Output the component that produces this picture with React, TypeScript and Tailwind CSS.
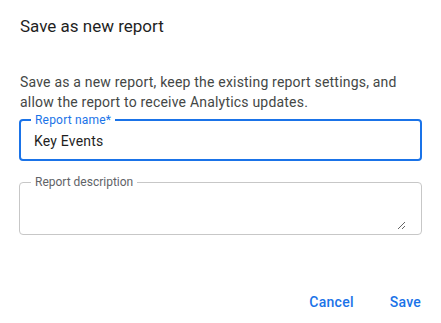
import React from 'react';

export default function App() {
	const [name, setName] = React.useState('Key Events');
	const [description, setDescription] = React.useState('');

	return (
		<div className="flex h-[323px] w-[441px] flex-col bg-white font-['Roboto',sans-serif]">
			<h2 className="px-5 pt-[14px] text-[17px] leading-6 font-normal text-[#1f1f1f]">
				Save as new report
			</h2>

			<p className="mt-[34px] px-5 text-[14px] leading-5 tracking-[0.2px] text-[#444746]">
				Save as a new report, keep the existing report settings, and allow the report to
				receive Analytics updates.
			</p>

			<div className="flex flex-col gap-[13px] px-[19px]">
				{/* Report name, focused */}
				<fieldset className="m-0 h-[49px] min-w-0 rounded-[4px] border-2 border-[#1a73e8] pr-3 pl-[10px]">
					<legend className="px-1 text-[12px] leading-4 tracking-[0.2px] text-[#1a73e8]">
						Report name*
					</legend>
					<input
						value={name}
						onChange={e => setName(e.target.value)}
						className="block h-[25px] w-full bg-transparent pl-[3px] text-[14px] tracking-[0.2px] text-[#1f1f1f] outline-none"
					/>
				</fieldset>

				{/* Report description */}
				<fieldset className="m-0 min-w-0 rounded-[4px] border border-[#c7c7c7] pr-[15px] pb-[4px] pl-[11px]">
					<legend className="px-1 text-[12px] leading-4 text-[#5f6368]">Report description</legend>
					<textarea
						value={description}
						onChange={e => setDescription(e.target.value)}
						className="block h-[40px] w-full resize-y bg-transparent pl-[3px] text-[14px] text-[#1f1f1f] outline-none"
					/>
				</fieldset>
			</div>

			<div className="mt-auto flex justify-end gap-5 pr-3 pb-[3px]">
				<button className="h-9 rounded px-2 text-[14px] font-medium tracking-[0.25px] text-[#1a73e8]">
					Cancel
				</button>
				<button className="h-9 rounded px-2 text-[14px] font-medium tracking-[0.25px] text-[#1a73e8]">
					Save
				</button>
			</div>
		</div>
	);
}
